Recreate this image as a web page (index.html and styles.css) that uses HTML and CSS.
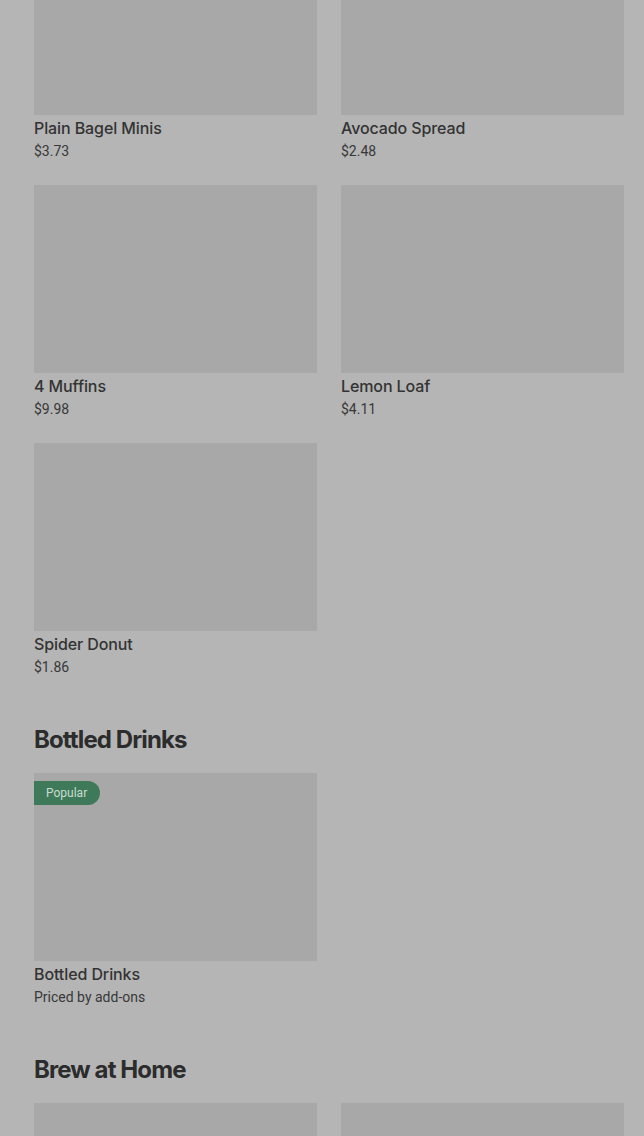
FILE: index.html
```html
<!DOCTYPE html>
<html lang="en">

<head>
    <meta charset="UTF-8">
    <meta name="viewport" content="width=device-width, initial-scale=1.0">
    <title>Menu</title>
    <link rel="stylesheet" href="styles.css">
</head>

<body>
    <div class="menu">
        <section class="section first">
            <div class="grid">
                <div class="item">
                    <div class="pic"></div>
                    <div class="name">Plain Bagel Minis</div>
                    <div class="price">$3.73</div>
                </div>
                <div class="item">
                    <div class="pic"></div>
                    <div class="name">Avocado Spread</div>
                    <div class="price">$2.48</div>
                </div>
                <div class="item">
                    <div class="pic"></div>
                    <div class="name">4 Muffins</div>
                    <div class="price">$9.98</div>
                </div>
                <div class="item">
                    <div class="pic"></div>
                    <div class="name">Lemon Loaf</div>
                    <div class="price">$4.11</div>
                </div>
                <div class="item">
                    <div class="pic"></div>
                    <div class="name">Spider Donut</div>
                    <div class="price">$1.86</div>
                </div>
            </div>
        </section>

        <section class="section">
            <h2>Bottled Drinks</h2>
            <div class="grid">
                <div class="item">
                    <div class="pic"><span class="badge">Popular</span></div>
                    <div class="name">Bottled Drinks</div>
                    <div class="price">Priced by add-ons</div>
                </div>
            </div>
        </section>

        <section class="section">
            <h2>Brew at Home</h2>
            <div class="grid">
                <div class="item">
                    <div class="pic"></div>
                </div>
                <div class="item">
                    <div class="pic"></div>
                </div>
            </div>
        </section>
    </div>
</body>

</html>
```

FILE: styles.css
```css
* {
    margin: 0;
    padding: 0;
    box-sizing: border-box;
}

body {
    background-color: #b5b5b5;
    color: #2f2f2f;
    font-family: Inter, "Noto Sans", sans-serif;
    overflow: hidden;
}

.menu {
    padding-left: 34px;
}

.section {
    margin-top: 47px;
}

.section.first {
    margin-top: -73px;
}

.section h2 {
    font-size: 24px;
    line-height: 32px;
    font-weight: 700;
    letter-spacing: -0.9px;
    color: #2c2c2c;
    margin-bottom: 17px;
}

.grid {
    display: grid;
    grid-template-columns: 283px 283px;
    gap: 24px;
}

.pic {
    height: 188px;
    background-color: #a8a8a8;
    position: relative;
}

.name {
    margin-top: 3px;
    font-size: 16px;
    line-height: 20px;
    font-weight: 500;
    letter-spacing: -0.1px;
    color: #333;
}

.price {
    margin-top: 3px;
    font-family: Roboto, "Noto Sans", sans-serif;
    font-size: 14px;
    line-height: 20px;
    color: #383838;
}

.badge {
    position: absolute;
    top: 8px;
    left: 0;
    height: 24px;
    line-height: 24px;
    padding: 0 13px 0 12px;
    border-radius: 0 12px 12px 0;
    background-color: #3e7a5a;
    color: #c9dccf;
    font-family: Roboto, sans-serif;
    font-size: 12px;
}
```
